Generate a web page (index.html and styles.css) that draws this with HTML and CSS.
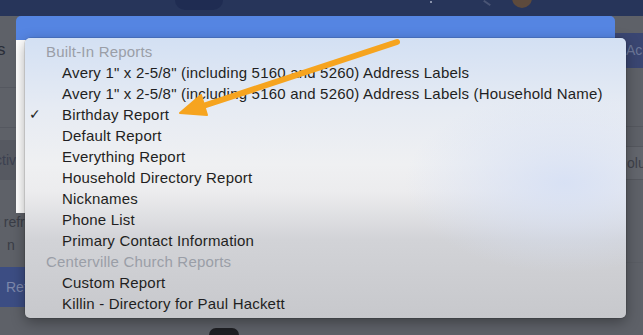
FILE: index.html
```html
<!DOCTYPE html>
<html lang="en">

<head>
    <meta charset="UTF-8">
    <title>Reports</title>
    <link rel="stylesheet" href="styles.css">
</head>

<body>
    <div class="topbar">
        <div class="topbar-logo"></div>
        <div class="topbar-dot"></div>
        <div class="topbar-search"></div>
        <div class="topbar-avatar"></div>
    </div>

    <div class="page">
        <div class="side-left">
            <div class="side-title">s</div>
            <div class="side-line"></div>
            <div class="side-line side-line-short"></div>
            <div class="side-band">ctiv</div>
            <div class="side-note">t refr</div>
            <div class="side-note side-note-short">n</div>
            <div class="side-btn">Ret</div>
        </div>

        <div class="modal">
            <div class="modal-head"></div>
            <div class="modal-body"></div>
        </div>

        <div class="side-right">
            <div class="side-tab">Ac</div>
            <div class="side-row"></div>
            <div class="side-row side-row-thin"></div>
            <div class="side-row side-row-text">olu</div>
            <div class="side-row side-row-tall"></div>
        </div>
    </div>

    <div class="footer-blob"></div>

    <div class="menu">
        <div class="menu-group">Built-In Reports</div>
        <div class="menu-item"><span class="check"></span>Avery 1" x 2-5/8" (including 5160 and 5260) Address Labels</div>
        <div class="menu-item"><span class="check"></span>Avery 1" x 2-5/8" (including 5160 and 5260) Address Labels (Household Name)</div>
        <div class="menu-item"><span class="check">&#10003;</span>Birthday Report</div>
        <div class="menu-item"><span class="check"></span>Default Report</div>
        <div class="menu-item"><span class="check"></span>Everything Report</div>
        <div class="menu-item"><span class="check"></span>Household Directory Report</div>
        <div class="menu-item"><span class="check"></span>Nicknames</div>
        <div class="menu-item"><span class="check"></span>Phone List</div>
        <div class="menu-item"><span class="check"></span>Primary Contact Information</div>
        <div class="menu-group">Centerville Church Reports</div>
        <div class="menu-item"><span class="check"></span>Custom Report</div>
        <div class="menu-item"><span class="check"></span>Killin - Directory for Paul Hackett</div>
    </div>

    <svg class="arrow" width="643" height="335" viewBox="0 0 643 335">
        <line x1="397" y1="42" x2="200" y2="107" stroke="#f6a41f" stroke-width="6" stroke-linecap="round" />
        <polygon points="180,113 201,95 207,115" fill="#f6a41f" stroke="#f6a41f" stroke-width="2" stroke-linejoin="round" />
    </svg>
</body>

</html>
```

FILE: styles.css
```css
* {
    box-sizing: border-box;
    font-family: "Liberation Sans", Arial, sans-serif;
}

html,
body {
    margin: 0;
    padding: 0;
}

body {
    position: relative;
    width: 643px;
    height: 335px;
    overflow: hidden;
    background-color: #5e6168;
}

.topbar {
    display: flex;
    align-items: flex-start;
    height: 16px;
    background-color: #27355a;
}

.topbar-logo {
    width: 48px;
    height: 10px;
    margin-left: 175px;
    border-radius: 0 0 24px 24px;
    background-color: #1f2c52;
}

.topbar-dot {
    width: 2px;
    height: 2px;
    margin: 1px 0 0 207px;
    background-color: #8a93ab;
}

.topbar-search {
    width: 8px;
    height: 2px;
    margin: 2px 0 0 51px;
    background-color: #4a5575;
    transform: rotate(35deg);
}

.topbar-avatar {
    width: 20px;
    height: 16px;
    margin: -8px 0 0 21px;
    border-radius: 0 0 10px 10px;
    background-color: #5d4a3c;
}

.page {
    display: grid;
    grid-template-columns: 16px 599px 28px;
    height: 319px;
}

.side-left {
    display: flex;
    flex-direction: column;
    color: #2f3340;
    font-size: 14px;
    white-space: nowrap;
}

.side-title {
    height: 28px;
    margin-top: 20px;
    font-size: 17px;
    line-height: 28px;
    text-indent: -3px;
    color: #2a2e39;
}

.side-line {
    height: 40px;
    margin-top: 23px;
    border-top: 1px solid #555860;
}

.side-line-short {
    height: 13px;
    margin-top: 0;
}

.side-band {
    height: 40px;
    line-height: 40px;
    text-indent: -5px;
    background-color: #565961;
    color: #3c4050;
}

.side-note {
    height: 16px;
    margin-top: 34px;
    font-size: 14px;
    line-height: 16px;
    text-indent: -4px;
    color: #3a3d46;
}

.side-note-short {
    margin-top: 7px;
    text-indent: 7px;
}

.side-btn {
    width: 30px;
    height: 40px;
    margin-top: 14px;
    line-height: 40px;
    padding-left: 6px;
    background-color: #3c4d83;
    color: #7d88ab;
}

.modal {
    display: flex;
    flex-direction: column;
}

.modal-head {
    height: 24px;
    border-radius: 5px 5px 0 0;
    background-color: #5585e2;
}

.modal-body {
    height: 173px;
    background-color: #ffffff;
}

.side-right {
    display: flex;
    flex-direction: column;
    padding-top: 17px;
    font-size: 14px;
    color: #5d6680;
    white-space: nowrap;
}

.side-tab {
    height: 35px;
    line-height: 35px;
    padding-left: 11px;
    background-color: #3a4672;
    color: #6d7899;
}

.side-row {
    height: 59px;
    border-bottom: 1px solid #55585f;
}

.side-row-thin {
    height: 20px;
}

.side-row-text {
    height: 33px;
    padding-top: 8px;
    padding-left: 12px;
    background-color: #63666d;
    color: #3e414a;
}

.side-row-tall {
    height: 83px;
    border-bottom: 1px solid #5a5d64;
}

.footer-blob {
    position: absolute;
    left: 209px;
    top: 328px;
    width: 30px;
    height: 7px;
    border-radius: 15px 15px 0 0;
    background-color: #1e1f23;
}

.menu {
    position: absolute;
    left: 25px;
    top: 38px;
    width: 601px;
    height: 280px;
    padding: 2.5px 0;
    border-radius: 5px;
    background:
        radial-gradient(ellipse 160px 90px at 540px 145px, rgba(214, 224, 245, 0.9), rgba(214, 224, 245, 0)),
        linear-gradient(to bottom, #d3e0f3 0%, #e6ebf3 25%, #eff0f2 45%, #ececee 55%, #d2d3d7 72%, #c7c8cc 100%);
    box-shadow: 0 4px 14px rgba(0, 0, 0, 0.35), 0 0 0 0.5px rgba(0, 0, 0, 0.2);
}

.menu-group,
.menu-item {
    height: 21px;
    font-size: 15px;
    letter-spacing: 0.2px;
    line-height: 21px;
    white-space: nowrap;
}

.menu-group {
    padding-left: 21px;
    color: #9a9ea7;
}

.menu-item {
    display: flex;
    color: #1f1f22;
}

.check {
    width: 37px;
    padding-left: 4px;
    font-size: 14px;
}

.arrow {
    position: absolute;
    left: 0;
    top: 0;
}
```
